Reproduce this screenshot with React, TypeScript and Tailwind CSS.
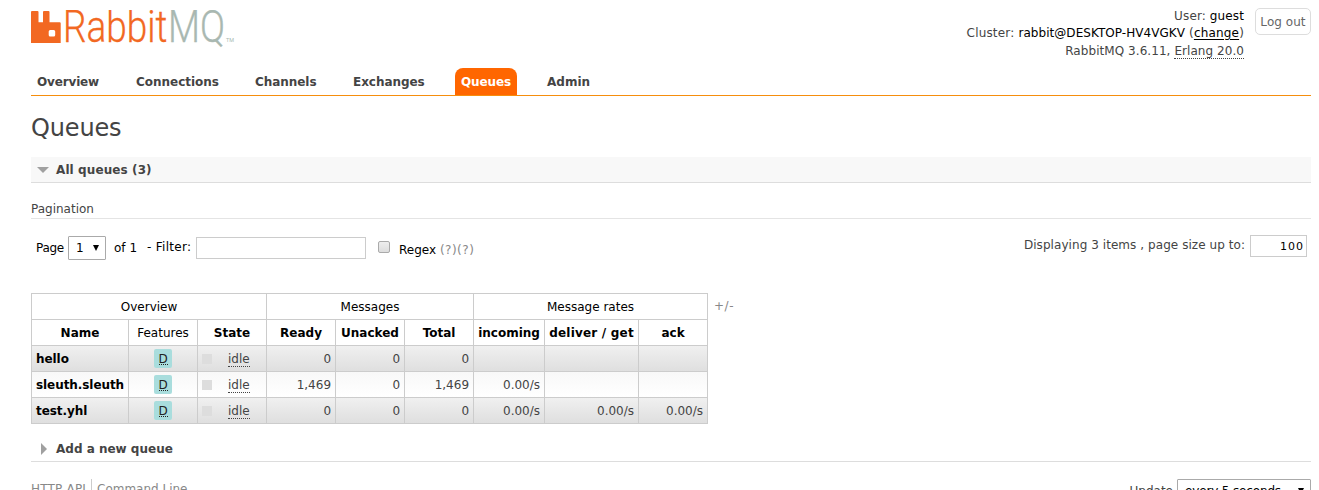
import React from "react";

const tabs = [
  { label: "Overview", cls: "w-[75px] tracking-[-0.15px]" },
  { label: "Connections", cls: "w-[95px] tracking-[-0.03px]" },
  { label: "Channels", cls: "w-[74px] tracking-[-0.05px]" },
  { label: "Exchanges", cls: "w-[84px] tracking-[-0.05px]" },
  { label: "Queues", cls: "w-[62px] tracking-[-0.1px]", active: true },
  { label: "Admin", cls: "w-[55px]" },
];

const rows = [
  { name: "hello", cells: ["0", "0", "0", "", "", ""] },
  { name: "sleuth.sleuth", cells: ["1,469", "0", "1,469", "0.00/s", "", ""] },
  { name: "test.yhl", cells: ["0", "0", "0", "0.00/s", "0.00/s", "0.00/s"] },
];

const columns = ["Name", "Features", "State", "Ready", "Unacked", "Total", "incoming", "deliver / get", "ack"];

const cell = "h-[26px] border-r border-b border-[#ccc] leading-[23px] whitespace-nowrap";

function Logo() {
  return (
    <svg width="206" height="38" viewBox="0 0 206 38" className="block">
      <path
        fill="#f26822"
        fillRule="evenodd"
        d="M1 1H6.500Q7.500 1 7.500 2V12.300H12V2Q12 1 13 1H17.500Q18.500 1 18.500 2V12.300H28.700Q29.700 12.300 29.700 13.300V33H0V2Q0 1 1 1ZM19.200 20Q17.700 20 17.700 21.500V25Q17.700 26.500 19.200 26.500H22.700Q24.200 26.500 24.200 25V21.500Q24.200 20 22.700 20Z"
      />
      <text x="32" y="32.300" textLength="104.500" lengthAdjust="spacingAndGlyphs" fill="#f26822" stroke="#f26822" strokeWidth="0.300" className="font-['Roboto'] text-[45px] font-light">
        Rabbit
      </text>
      <text x="137" y="32.300" textLength="57" lengthAdjust="spacingAndGlyphs" fill="#a9b8b1" stroke="#a9b8b1" strokeWidth="0.300" className="font-['Roboto'] text-[45px] font-light">
        MQ
      </text>
      <text x="195" y="32" textLength="8" lengthAdjust="spacingAndGlyphs" fill="#a9b8b1" className="font-['Roboto'] text-[6px]">
        TM
      </text>
    </svg>
  );
}

function Arrow({ className = "" }: { className?: string }) {
  return (
    <svg width="6" height="6" viewBox="0 0 6 6" className={className}>
      <path d="M0 0H6L3 6Z" fill="#000" />
    </svg>
  );
}

export default function App() {
  return (
    <div className="h-[490px] overflow-hidden bg-white pr-2 pl-[31px] font-['DejaVu_Sans',Verdana,sans-serif] text-[12px] text-[#444]">
      <header className="flex h-[68px] justify-between">
        <div className="pt-[10px]">
          <Logo />
        </div>
        <div className="flex gap-[11px] pt-[7px]">
          <div className="pt-[1px] text-right leading-[17.500px] whitespace-nowrap">
            <div className="tracking-[0.12px]">User: <span className="text-black">guest</span></div>
            <div className="-mt-[1px] tracking-[0.18px]">
              Cluster: <span className="tracking-[0.05px] text-black">rabbit@DESKTOP-HV4VGKV</span> (
              <span className="text-black underline underline-offset-2">change</span>)
            </div>
            <div className="mt-[1px] tracking-[0.06px]">
              RabbitMQ 3.6.11, <span className="inline-block h-[16px] border-b border-dotted border-[#444]">Erlang 20.0</span>
            </div>
          </div>
          <button className="mt-[1px] h-[27px] w-[56px] rounded-[5px] border border-[#ddd] text-[12px] tracking-[0.05px] whitespace-nowrap text-[#666]">
            Log out
          </button>
        </div>
      </header>

      <nav className="flex h-[28px] gap-6 border-b border-[#f68e0d]">
        {tabs.map((t) => (
          <a
            key={t.label}
            className={`${t.cls} ${t.active ? "rounded-t-[8px] bg-[#ff6600] text-white" : ""} h-[27px] pt-[1px] pl-[6px] leading-[27px] font-bold whitespace-nowrap`}
          >
            {t.label}
          </a>
        ))}
      </nav>

      <h1 className="h-[61px] pt-[14px] text-[24px] leading-[36px] tracking-[-0.15px]">Queues</h1>

      <h2 className="flex h-[26px] items-center border-b border-[#ddd] bg-[#f8f8f8] pl-[6px] font-bold">
        <svg width="12" height="6" viewBox="0 0 12 6"><path d="M0 0H12L6 6Z" fill="#a0a0a0" /></svg>
        <span className="ml-[7px] tracking-[0.1px]">All queues (3)</span>
      </h2>

      <h3 className="h-[36px] border-b border-[#e4e4e4] pt-[17px] leading-[18px]">Pagination</h3>

      <div className="flex h-[74px] justify-between pr-1 pl-[5px] text-black">
        <div className="flex">
          <span className="mt-[20px] w-[32px] leading-[18px] tracking-[-0.3px]">Page</span>
          <div className="mt-[17px] flex h-[24px] w-[38px] items-center rounded-[1px] border border-[#aaa] pl-[7px]">
            1<Arrow className="ml-[9px]" />
          </div>
          <span className="mt-[20px] ml-[8px] w-[33px] leading-[18px] whitespace-pre">of 1</span>
          <span className="mt-[19px] w-[49px] leading-[18px] tracking-[0.3px] whitespace-nowrap">- Filter:</span>
          <div className="mt-[18px] h-[22px] w-[170px] border border-[#ccc]" />
          <div className="mt-[22px] ml-[12px] h-[12px] w-[12px] rounded-[2px] border border-[#aaa] bg-linear-to-b from-[#eee] to-[#ddd]" />
          <span className="mt-[22px] ml-[9px] leading-[18px] whitespace-nowrap">
            Regex <span className="tracking-[0.5px] text-[#888]">(?)(?)</span>
          </span>
        </div>
        <div className="flex">
          <span className="mt-[17px] mr-[5px] leading-[18px] tracking-[0.06px] whitespace-nowrap text-[#444]">
            Displaying 3 items , page size up to:
          </span>
          <div className="mt-[16px] h-[22px] w-[57px] border border-[#ccc] pr-[2px] text-right text-[11px] leading-[21px] tracking-[1px]">100</div>
        </div>
      </div>

      <div className="flex items-start">
        <table className="w-[677px] shrink-0 table-fixed border-separate border-spacing-0 border-t border-l border-[#ccc]">
          <colgroup>
            <col className="w-[97px]" />
            <col className="w-[69px]" />
            <col className="w-[69px]" />
            <col className="w-[69px]" />
            <col className="w-[69px]" />
            <col className="w-[69px]" />
            <col className="w-[71px]" />
            <col className="w-[94px]" />
            <col className="w-[69px]" />
          </colgroup>
          <thead className="text-black">
            <tr>
              <th colSpan={3} className={`${cell} px-0 pt-[2px] pb-0 font-normal`}>Overview</th>
              <th colSpan={3} className={`${cell} px-0 pt-[2px] pb-0 font-normal`}>Messages</th>
              <th colSpan={3} className={`${cell} px-0 pt-[2px] pb-0 font-normal`}>Message rates</th>
            </tr>
            <tr>
              {columns.map((c) => (
                <th key={c} className={`${cell} px-0 pt-[2px] pb-0 ${c === "Features" ? "font-normal" : "font-bold"} ${c === "deliver / get" ? "tracking-[0.2px]" : ""}`}>{c}</th>
              ))}
            </tr>
          </thead>
          <tbody>
            {rows.map((r, i) => (
              <tr key={r.name}>
                {[0, 1, 2, 3, 4, 5, 6, 7, 8].map((c) => (
                  <td
                    key={c}
                    className={`${cell} bg-linear-to-b ${i % 2 ? "from-[#f8f8f8] to-white" : "from-[#f0f0f0] to-[#dfdfdf]"} ${c === 0 ? "pt-[2px] pr-0 pb-0 pl-1 font-bold tracking-[-0.07px] text-black" : c > 2 ? "pt-[2px] pr-1 pb-0 pl-0 text-right" : "p-0"}`}
                  >
                    {c === 0 && r.name}
                    {c === 1 && (
                      <div className="mx-auto h-[19px] w-[18px] rounded-[2px] bg-[#a9dddd] pt-[1px] text-center text-[#222]">
                        <span className="mx-auto block h-[15px] w-[9px] border-b border-dotted border-[#222] leading-[18px]">D</span>
                      </div>
                    )}
                    {c === 2 && (
                      <div className="flex items-center pl-1">
                        <span className="h-[10px] w-[10px] bg-[#ddd]" />
                        <span className="ml-[16px] h-[16px] border-b border-dotted border-[#444] leading-[16px]">idle</span>
                      </div>
                    )}
                    {c > 2 && r.cells[c - 3]}
                  </td>
                ))}
              </tr>
            ))}
          </tbody>
        </table>
        <span className="ml-[6px] leading-[26px] tracking-[0.5px] text-[#888]">+/-</span>
      </div>

      <h2 className="mt-[12px] flex h-[26px] items-center border-b border-[#ddd] pl-[10px] font-bold">
        <svg width="6" height="12" viewBox="0 0 6 12"><path d="M0 0V12L6 6Z" fill="#a0a0a0" /></svg>
        <span className="ml-[9px]">Add a new queue</span>
      </h2>

      <footer className="flex justify-between pt-[17px]">
        <div className="flex h-[18px] leading-[20px] whitespace-nowrap text-[#888]">
          <span className="w-[61px] border-r border-[#ccc] tracking-[0.2px]">HTTP API</span>
          <span className="pl-[5px]">Command Line</span>
        </div>
        <div className="flex">
          <span className="mr-[4px] pt-[2px] leading-[20px]">Update</span>
          <div className="flex h-[24px] w-[134px] items-center justify-between rounded-[1px] border border-[#aaa] pr-[6px] pl-[7px] tracking-[-0.15px] text-black">
            every 5 seconds
            <Arrow />
          </div>
        </div>
      </footer>
    </div>
  );
}
